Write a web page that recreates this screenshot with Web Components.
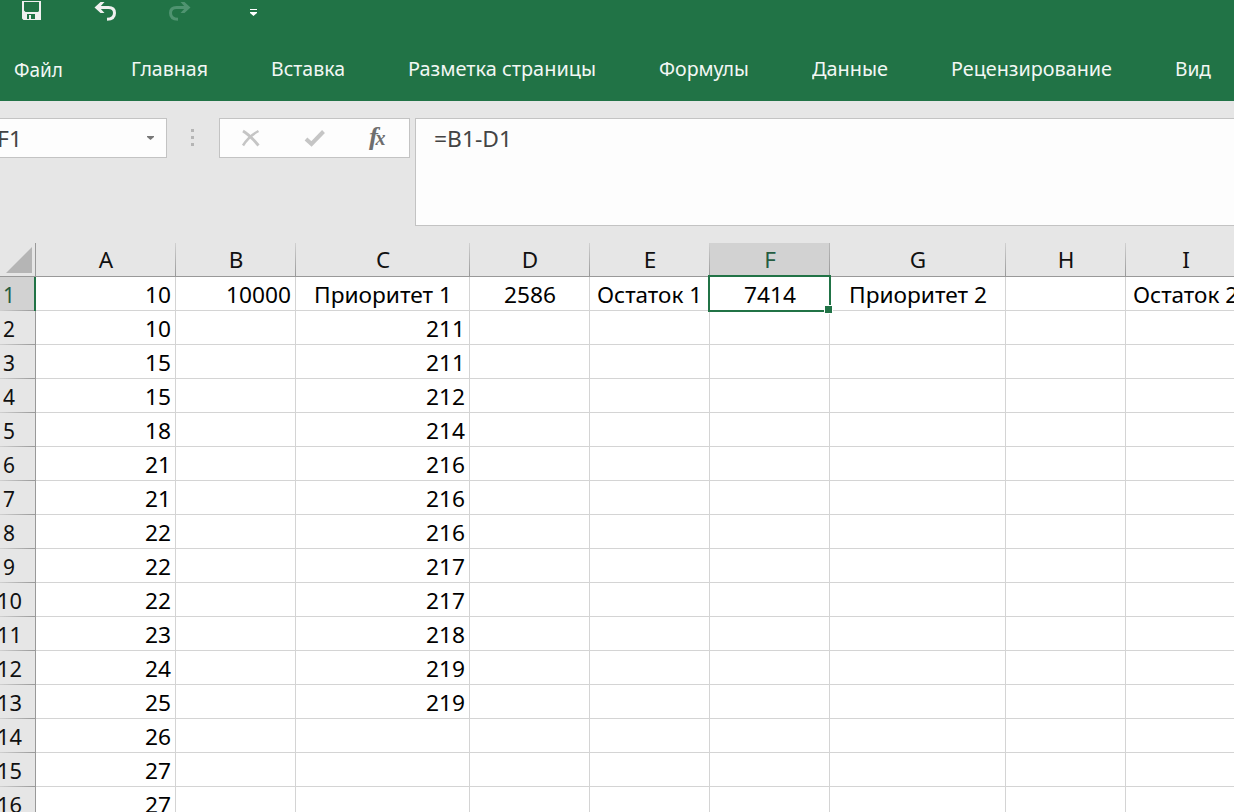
<!DOCTYPE html>
<html lang="ru">
<head>
<meta charset="utf-8">
<title>Excel</title>
<style>
html,body{margin:0;height:100%;overflow:hidden;background:#e6e6e6}
</style>
</head>
<body>
<excel-app></excel-app>
<script>
class Base extends HTMLElement {
  render(html) {
    if (!this.shadowRoot) this.attachShadow({ mode: 'open' });
    this.shadowRoot.innerHTML = html;
  }
}

/* A single line of text whose advance width is set by the "w" attribute. */
class FitText extends Base {
  connectedCallback() {
    const w = +this.getAttribute('w');
    this.render(`<style>:host{display:inline-block;white-space:nowrap;width:${w ? w + 'px' : 'auto'};flex:none}
      span{display:inline-block;transform-origin:0 50%}</style><span><slot></slot></span>`);
    if (w) {
      const s = this.shadowRoot.querySelector('span');
      s.style.transform = `scaleX(${w / s.getBoundingClientRect().width})`;
    }
  }
}
customElements.define('fit-text', FitText);

class QuickAccess extends Base {
  connectedCallback() {
    this.render(`<style>:host{display:flex;height:36px;padding-left:21px;align-items:flex-start}
      svg{display:block;flex:none}</style>
      <svg width="21" height="22"><path fill="#f0f0f0" fill-rule="evenodd" d="M1 1.500V1H20V20H2.500L1 18.500ZM3 2V10.500L4.500 12H17L18 11V2ZM6 14V19H8V15H10V19H14V14Z"/></svg>
      <svg width="23" height="22" style="margin-left:52px"><g fill="none" stroke="#f0f0f0"><path d="M4 7.500H14.500C19 7.500 20.500 10.300 20.500 13C20.500 17 17.500 19.200 13 19.300" stroke-width="3"/></g><path fill="#f0f0f0" d="M.5 7.500 6.500 2H10.500L5.500 7.500 10.500 13H6.500Z"/></svg>
      <svg width="23" height="22" style="margin-left:51px"><path fill="none" stroke="#4f9370" stroke-width="3" d="M19 7.500H8.500C4 7.500 2.500 10.300 2.500 13C2.500 17 5.500 19.200 10 19.300"/><path fill="#4f9370" d="M22.500 7.500 16.500 2H12.500L17.500 7.500 12.500 13H16.500Z"/></svg>
      <svg width="9" height="18" style="margin-left:58px"><path fill="#fff" d="M1 9H8V10H1ZM1 12H8V13L4.500 16 1 13Z"/></svg>`);
  }
}
customElements.define('quick-access', QuickAccess);

class RibbonTabs extends Base {
  connectedCallback() {
    /* [label, space before, text width] */
    const tabs = [['Файл',14,49],['Главная',68,77],['Вставка',63,74],['Разметка страницы',63,188],['Формулы',63,90],['Данные',63,76],['Рецензирование',63,161],['Вид',63,36]];
    this.render(`<style>:host{display:flex;height:65px;color:#f2f7f4;font:20.5px/65px "Noto Sans",sans-serif}
      fit-text:first-of-type{padding-top:1px}</style>` +
      tabs.map(t => `<fit-text w="${t[2]}" style="margin-left:${t[1]}px">${t[0]}</fit-text>`).join(''));
  }
}
customElements.define('ribbon-tabs', RibbonTabs);

class FormulaBar extends Base {
  connectedCallback() {
    this.render(`<style>
      :host{display:flex;height:141px;padding-top:17px;box-sizing:border-box;align-items:flex-start;font:22.500px/40px "Noto Sans",sans-serif;color:#444}
      .name,.tools,.formula{box-sizing:border-box;background:#fdfdfd;border:1px solid #c3c3c3;height:40px}
      .name{width:167px;border-left:0;display:flex;justify-content:space-between;padding-right:11px;align-items:flex-start}
      .name svg{align-self:center}
      .name fit-text{margin-left:-3px}
      .dots{width:52px;height:40px;display:block}
      .tools{width:191px}.tools svg{display:block}
      .formula{flex:1;height:108px;margin-left:5px;border-right:0;padding-left:18px}
      text{font:italic bold 25px "Liberation Serif",serif;fill:#6e6e6e}
      </style>
      <div class="name"><fit-text w="25">F1</fit-text><svg width="9" height="6"><path fill="#777" d="M1 1H8V2L4.500 5 1 2Z"/></svg></div>
      <svg class="dots" viewBox="0 0 52 40"><path fill="#b5b5b5" d="M24 11h3v3h-3zM24 18h3v3h-3zM24 25h3v3h-3z"/></svg>
      <div class="tools"><svg width="189" height="38"><g fill="none" stroke="#c5c5c5"><path stroke-width="2.800" d="M23 12C28 15 34 21 38.500 26.500"/><path stroke-width="2.500" d="M38.500 12C33 15 27 20 23 26.500"/><path stroke-width="4" d="M86 20 91.500 25 103.500 12.500"/></g>
        <text x="149" y="26" textLength="9" lengthAdjust="spacingAndGlyphs">f</text><text x="155.500" y="26" style="font-size:20px">x</text></svg></div>
      <div class="formula"><fit-text w="78">=B1-D1</fit-text></div>`);
  }
}
customElements.define('formula-bar', FormulaBar);

class SheetCell extends Base {
  connectedCallback() {
    this.render(`<style>:host{display:flex;position:relative;box-sizing:border-box;height:34px;border-right:1px solid #d4d4d4;border-bottom:1px solid #d4d4d4;background:#fff;color:#000;line-height:35px;justify-content:flex-end;padding-right:4px;white-space:nowrap}
      :host([center]){justify-content:center;padding-right:0}
      .box{position:absolute;left:-2px;top:-2px;right:-2px;bottom:-2px;border:2px solid #217346;pointer-events:none}
      .box i{position:absolute;right:-4px;bottom:-4px;width:7px;height:7px;background:#217346;border:1px solid #fff}
      :host([selected]){z-index:2}</style><slot></slot>${this.hasAttribute('selected') ? '<div class="box"><i></i></div>' : ''}`);
  }
}
customElements.define('sheet-cell', SheetCell);

class ColumnHead extends Base {
  connectedCallback() {
    this.render(`<style>:host{display:block;box-sizing:border-box;height:35px;border-bottom:1px solid #999;text-align:center;color:#111;line-height:35px;
        background:linear-gradient(#d0d0d0,#999) right bottom/1px 33px no-repeat #e6e6e6}
      :host([active]){color:#255c41;background:linear-gradient(#b8b8b8,#999) right bottom/1px 33px no-repeat,linear-gradient(#d2d2d2,#d2d2d2) 0 bottom/100% 33px no-repeat}</style><slot></slot>`);
  }
}
customElements.define('column-head', ColumnHead);

class RowHead extends Base {
  connectedCallback() {
    this.render(`<style>:host{display:block;box-sizing:border-box;height:34px;border-right:1px solid #999;background:linear-gradient(90deg,#d0d0d0,#999) 0 bottom/100% 1px no-repeat #e6e6e6;color:#111;line-height:35px}
      div{width:18px;height:33px;display:flex;justify-content:center}
      :host([active]){background-color:#d2d2d2;color:#255c41;border-right:2px solid #217346}</style><div><slot></slot></div>`);
  }
}
customElements.define('row-head', RowHead);

class SheetGrid extends Base {
  connectedCallback() {
    const a = [10,10,15,15,18,21,21,22,22,22,23,24,25,26,27,27];
    const c = ['',211,211,212,214,216,216,216,217,217,218,219,219];
    const first = { B:['10000',65], C:['Приоритет 1',138], D:['2586',52], E:['Остаток 1',105], F:['7414',52], G:['Приоритет 2',138], I:['Остаток 2',105] };
    let h = `<svg width="36" height="35"><path fill="#b5b5b5" d="M32 5V31H6Z"/><path fill="#999" d="M35 1h1v34h-1zM0 34h36v1H0z"/></svg>`;
    for (const L of 'ABCDEFGHI') h += `<column-head ${L === 'F' ? 'active' : ''}>${L}</column-head>`;
    for (let r = 0; r < 16; r++) {
      h += `<row-head ${r ? '' : 'active'}><fit-text w="${r > 8 ? 25 : 12}">${r + 1}</fit-text></row-head>`;
      for (const L of 'ABCDEFGHI') {
        let v = '', w = 0;
        if (L === 'A') { v = a[r]; w = 26; }
        else if (L === 'C' && r && c[r]) { v = c[r]; w = 39; }
        else if (!r && first[L]) [v, w] = first[L];
        const center = !r && L > 'B';
        h += `<sheet-cell ${center ? 'center' : ''} ${!r && L === 'F' ? 'selected' : ''}>${v === '' ? '' : `<fit-text w="${w}">${v}</fit-text>`}</sheet-cell>`;
      }
    }
    this.render(`<style>:host{display:grid;grid-template-columns:36px 140px 120px 174px 120px 120px 120px 176px 120px 120px;grid-template-rows:35px;grid-auto-rows:34px;font:22.500px "Noto Sans",sans-serif}svg{display:block}</style>` + h);
  }
}
customElements.define('sheet-grid', SheetGrid);

class ExcelApp extends Base {
  connectedCallback() {
    this.render(`<style>:host{display:block;width:1234px;height:812px;overflow:hidden;background:#e6e6e6}
      header{background:#217346;height:101px}</style>
      <header><quick-access></quick-access><ribbon-tabs></ribbon-tabs></header>
      <formula-bar></formula-bar><sheet-grid></sheet-grid>`);
  }
}
customElements.define('excel-app', ExcelApp);
</script>
</body>
</html>
